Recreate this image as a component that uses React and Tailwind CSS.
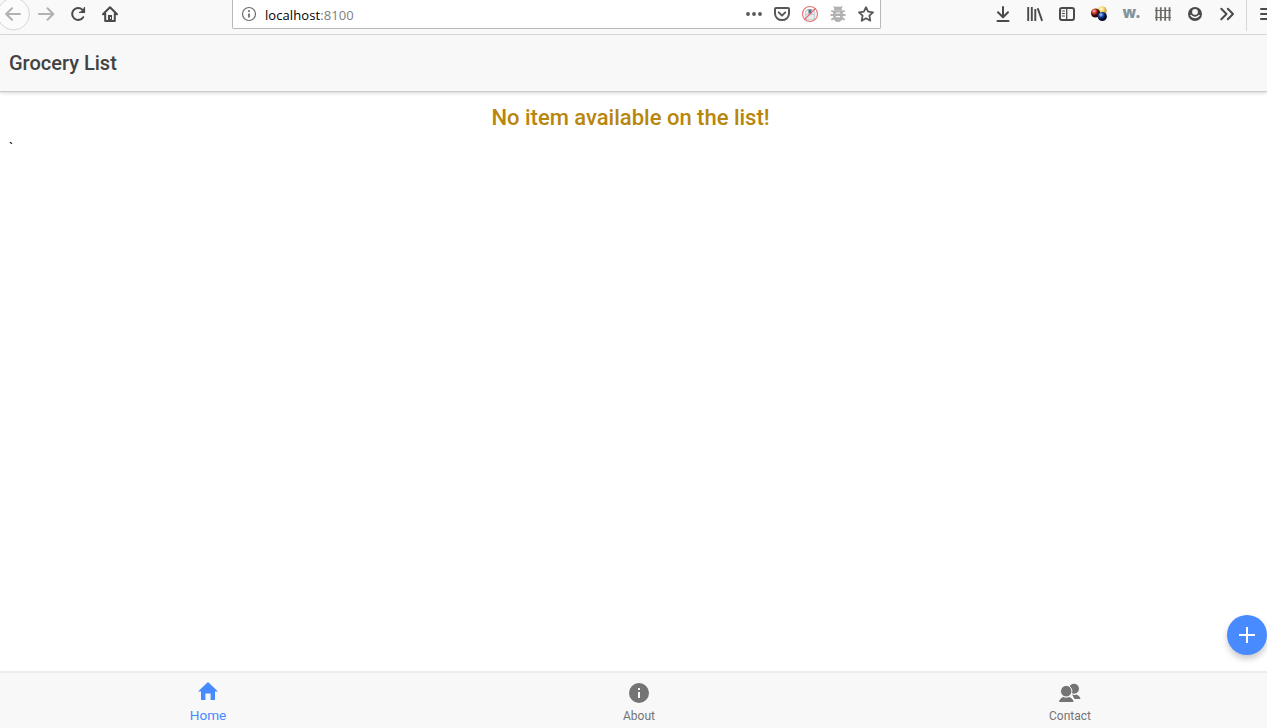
import React from "react";

function Icon({ children, className = "text-[#4a4a4b]" }) {
  return (
    <svg viewBox="0 0 16 16" width="16" height="16" fill="none" stroke="currentColor" strokeWidth="2" strokeLinecap="round" strokeLinejoin="round" className={`block shrink-0 overflow-visible ${className}`}>
      {children}
    </svg>
  );
}

function Slot({ children }) {
  return <div className="flex h-7 w-8 shrink-0 items-center justify-center">{children}</div>;
}

function SmallSlot({ children }) {
  return <div className="flex h-7 w-7 shrink-0 items-center justify-center">{children}</div>;
}

function Navigation() {
  return (
    <div className="-ml-0.5 flex shrink-0">
      <Slot>
        <Icon className="text-[#b1b1b2]">
          <circle cx="7.5" cy="8" r="16" fill="#fbfbfb" stroke="#d6d6d6" strokeWidth="1" />
          <path d="M14 8H0.5M6 2.2L0.2 8L6 13.8" />
        </Icon>
      </Slot>
      <Slot>
        <Icon className="text-[#b1b1b2]">
          <path d="M1 8H14.5M9.5 2.2L15.3 8L9.5 13.8" />
        </Icon>
      </Slot>
      <Slot>
        <Icon>
          <path d="M13.2 11.2A6 6 0 1 1 12.3 3.6" />
          <path d="M15 1.2V7H9.2Z" fill="currentColor" stroke="none" />
          <path d="M14.4 1.6V6.4H9.6" strokeWidth="1.4" />
        </Icon>
      </Slot>
      <Slot>
        <Icon>
          <path d="M1 8.3L8 1.3L15 8.3M3.2 7.8V15H12.8V7.8" />
          <path d="M6 14.5V9H10V14.5Z" fill="currentColor" stroke="none" />
          <path d="M8.5 11.5V12.4" stroke="#f9f9fa" strokeWidth="1" />
        </Icon>
      </Slot>
    </div>
  );
}

function AddressBar() {
  return (
    <div className="ml-[106px] flex h-[29px] w-[649px] shrink-0 rounded-b-[2px] border border-t-0 border-[#b8b8b8] bg-white">
      <div className="ml-2 flex h-7 w-4 items-center">
        <Icon className="text-[#6b6b6c]">
          <circle cx="8" cy="8" r="6.5" strokeWidth="1.2" />
          <path d="M8 7.5V11.5" strokeWidth="1.8" strokeLinecap="butt" />
          <path d="M8 4.2V6" strokeWidth="1.8" strokeLinecap="butt" />
        </Icon>
      </div>
      <div className="ml-[8px] mt-[5px] font-['Open_Sans',sans-serif] text-[13px] leading-5 tracking-[0.08px] text-black">
        localhost<span className="text-[#808080]">:8100</span>
      </div>
      <div className="ml-auto flex">
        <SmallSlot>
          <Icon className="text-[#58585a]">
            <g fill="currentColor" stroke="none">
              <circle cx="2" cy="8" r="1.9" />
              <circle cx="8" cy="8" r="1.9" />
              <circle cx="14" cy="8" r="1.9" />
            </g>
          </Icon>
        </SmallSlot>
        <SmallSlot>
          <Icon className="text-[#58585a]">
            <path d="M2 2H14Q15 2 15 3V7.5A7 6.6 0 0 1 1 7.5V3Q1 2 2 2Z" />
            <path d="M4.7 6.4L8 9.6L11.3 6.4" />
          </Icon>
        </SmallSlot>
        <SmallSlot>
          <Icon>
            <rect x="3.2" y="3.5" width="9.6" height="10.5" rx="3" fill="#e6eaed" stroke="#b5c0c8" strokeWidth=".9" />
            <path d="M6.5 3.5H9.5V7.5H6.5Z" fill="#54758a" stroke="none" />
            <path d="M4 8.5H12" stroke="#b5c0c8" strokeWidth=".8" />
            <circle cx="8" cy="8" r="7.5" stroke="#ed7474" strokeWidth="1.2" />
            <path d="M2.7 13.3L13.3 2.7" stroke="#ed6262" strokeWidth="1.2" />
          </Icon>
        </SmallSlot>
        <SmallSlot>
          <Icon className="text-[#b1b1b2]">
            <path d="M3.2 4.5H12.8V10.5A4.8 5.5 0 0 1 3.2 10.5Z" fill="currentColor" stroke="none" />
            <path d="M4 4.6A4 4 0 0 1 12 4.6Z" fill="currentColor" stroke="none" />
            <path d="M4.5 1L6 2.8M11.5 1L10 2.8M2 5L4 6M14 5L12 6M1.2 9H14.8M2 13.4L4 12M14 13.4L12 12" strokeWidth="1.9" />
            <path d="M6.3 7H9.7M6.3 10.6H9.7" stroke="white" strokeWidth="1.2" />
          </Icon>
        </SmallSlot>
        <SmallSlot>
          <Icon className="text-[#58585a]">
            <path d="M8 1.2L10.1 5.6L15 6.3L11.4 9.7L12.3 14.7L8 12.3L3.7 14.7L4.6 9.7L1 6.3L5.9 5.6Z" strokeWidth="1.8" />
          </Icon>
        </SmallSlot>
      </div>
    </div>
  );
}

function Extensions() {
  return (
    <div className="ml-[106px] flex shrink-0">
      <Slot>
        <Icon>
          <path d="M8 1V10.5M3 6.3L8 11.2L13 6.3M2.5 15H13.5" />
        </Icon>
      </Slot>
      <Slot>
        <Icon>
          <path d="M1.2 2V14M4.8 2V14M8.3 4V14M11 3.1L14.8 14" strokeLinecap="square" strokeWidth="1.9" />
        </Icon>
      </Slot>
      <Slot>
        <Icon>
          <rect x="1" y="2" width="14" height="12" rx="2" />
          <path d="M7.7 2V14" strokeWidth="1.3" />
          <path d="M3.3 5H5.5M3.3 7.5H5.5M3.3 10H5.5" strokeWidth="1" />
        </Icon>
      </Slot>
      <Slot>
        <Icon>
          <defs>
            <radialGradient id="yellowBall" cx="40%" cy="30%"><stop stopColor="#fffbd5" /><stop offset=".6" stopColor="#f5d668" /><stop offset="1" stopColor="#c9a94a" /></radialGradient>
            <radialGradient id="redBall" cx="35%" cy="30%"><stop stopColor="#ffc6b7" /><stop offset=".5" stopColor="#c53a29" /><stop offset="1" stopColor="#310706" /></radialGradient>
            <radialGradient id="blueBall" cx="35%" cy="30%"><stop stopColor="#b8c9ff" /><stop offset=".5" stopColor="#234eb0" /><stop offset="1" stopColor="#030b2b" /></radialGradient>
          </defs>
          <g stroke="none">
            <circle cx="11.2" cy="4.8" r="4.5" fill="url(#yellowBall)" />
            <circle cx="4.5" cy="7" r="4.6" fill="url(#redBall)" />
            <circle cx="11.3" cy="10.5" r="4.6" fill="url(#blueBall)" />
          </g>
        </Icon>
      </Slot>
      <Slot>
        <span className="relative -top-0.5 font-['Open_Sans',sans-serif] text-[15px] font-extrabold leading-4 tracking-[-0.5px] text-[#82949d]">w.</span>
      </Slot>
      <Slot>
        <Icon className="text-[#6c6c66]">
          <path d="M1.5 1.2V14.8M5.8 1.2V14.8M10.2 1.2V14.8M14.5 1.2V14.8" strokeLinecap="butt" strokeWidth="1.8" />
          <path d="M0 4.5H16M0 11.5H16" strokeLinecap="butt" strokeWidth="1.1" />
        </Icon>
      </Slot>
      <Slot>
        <Icon>
          <circle cx="8" cy="8" r="7" fill="currentColor" stroke="none" />
          <circle cx="8" cy="5.9" r="2.9" fill="#f9f9fa" stroke="none" />
          <path d="M3.9 9.6Q8 13.6 12.1 9.6" stroke="#f9f9fa" strokeWidth="1.4" />
          <path d="M4.8 8.4Q8 11.4 11.2 8.4" strokeWidth="1" />
        </Icon>
      </Slot>
      <Slot>
        <Icon>
          <path d="M2.3 2.8L7.5 8L2.3 13.2M8.8 2.8L14 8L8.8 13.2" />
        </Icon>
      </Slot>
      <div className="ml-[3px] h-[31px] w-px shrink-0 bg-[#d7d7db]" />
      <div className="ml-[13px] flex h-7 items-center">
        <Icon>
          <path d="M1 3H15M1 8H15M1 13H15" />
        </Icon>
      </div>
    </div>
  );
}

const tabs = [
  {
    name: "Home",
    style: "pt-[8px] text-[13.6px] text-[#488aff]",
    label: "mt-[4px] leading-4",
    icon: <path d="M8.4 19V12.4H13.6V19H18V10.5H21L11 1L1 10.5H4V19Z" />,
  },
  {
    name: "About",
    style: "pt-[9px] text-[12px] text-[#747474]",
    label: "mt-[4px] leading-4",
    icon: <path fillRule="evenodd" d="M11 1A10 10 0 1 0 11 21A10 10 0 1 0 11 1M10 6H12V8H10ZM10 10H12V16H10Z" />,
  },
  {
    name: "Contact",
    style: "pt-[9px] text-[12px] text-[#747474]",
    label: "mt-[4px] leading-4",
    icon: (
      <>
        <ellipse cx="15" cy="6.8" rx="5" ry="5" />
        <path d="M13 12.6Q15 13.6 17.3 12.4Q20.8 13.6 21.5 17H15.5Z" />
        <ellipse cx="7.2" cy="9.2" rx="5.7" ry="5.8" stroke="#f8f8f8" strokeWidth="1" />
        <path d="M4.4 15Q7.3 16.4 10.2 15Q14 16.4 14.6 20H0Q.6 16.4 4.4 15Z" />
      </>
    ),
  },
];

function Tab({ tab }) {
  return (
    <div className={`flex flex-1 flex-col items-center ${tab.style}`}>
      <svg width="22" height="22" viewBox="0 0 22 22" fill="currentColor" className="block shrink-0">{tab.icon}</svg>
      <span className={tab.label}>{tab.name}</span>
    </div>
  );
}

export default function App() {
  return (
    <div className="relative flex h-[728px] w-[1267px] flex-col overflow-hidden bg-white font-[Roboto,sans-serif]">
      <div className="flex h-[35px] shrink-0 items-start overflow-hidden border-b border-[#dcdcdd] bg-[#f9f9fa]">
        <Navigation />
        <AddressBar />
        <Extensions />
      </div>
      <header className="flex h-[56px] shrink-0 items-center bg-[#f8f8f8] pl-[9px] shadow-[0_1px_1px_#cccccc,0_2px_4px_#00000028]">
        <h1 className="text-[20px] font-medium text-[#424242]">Grocery List</h1>
      </header>
      <main className="flex-1">
        <h2 className="mt-[11px] pr-[6px] text-center text-[22px] font-medium leading-8 text-[#b8860b]">No item available on the list!</h2>
        <p className="ml-[9px] mt-[4px] text-[14px] leading-5 text-black">`</p>
      </main>
      <nav className="-ml-[7.5px] flex h-[57px] w-[1293px] shrink-0 border-t-2 border-[#ececec] bg-[#f8f8f8]">
        {tabs.map((tab) => <Tab key={tab.name} tab={tab} />)}
      </nav>
      <button aria-label="Add" className="absolute right-0 top-[615px] flex size-10 items-center justify-center rounded-full bg-[#488aff] text-white shadow-[0_4px_6px_#00000035]">
        <svg width="16" height="16" viewBox="0 0 16 16" stroke="currentColor" strokeWidth="2"><path d="M0 8H16M8 0V16" /></svg>
      </button>
    </div>
  );
}
